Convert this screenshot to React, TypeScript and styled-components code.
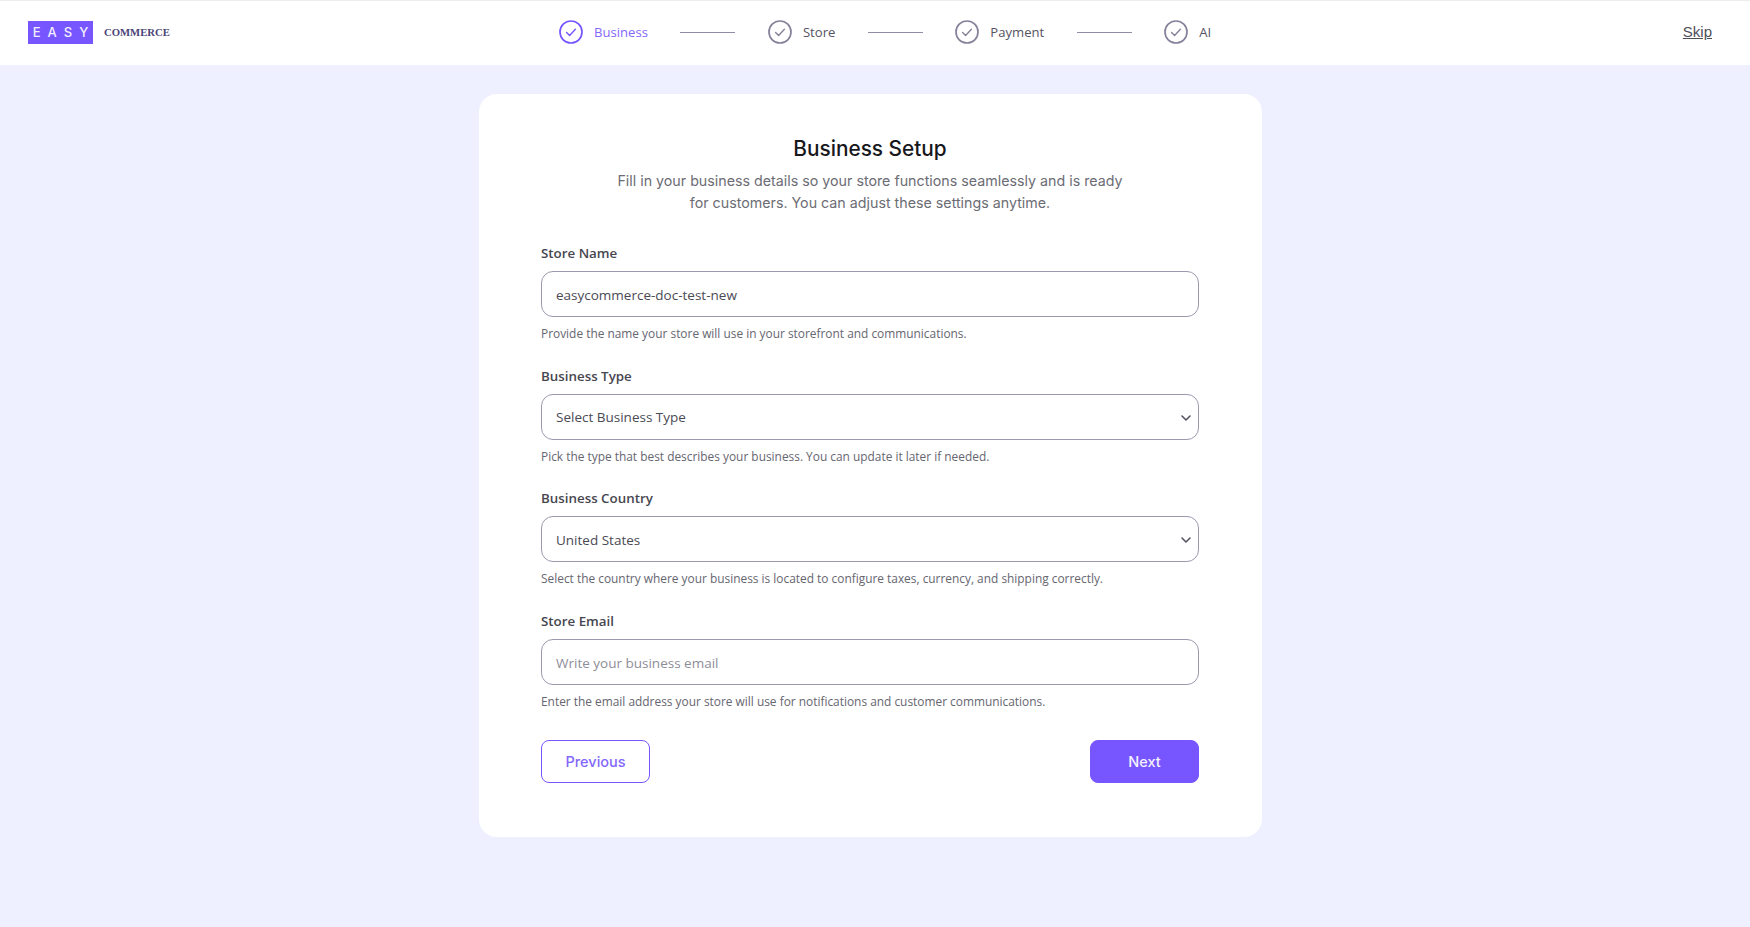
import { Fragment } from "react";
import { ChevronDown } from "lucide-react";
import styled, { createGlobalStyle } from "styled-components";

const GlobalStyle = createGlobalStyle`
  html, body {
    margin: 0;
    padding: 0;
    background: #eef0ff;
  }
  * {
    box-sizing: border-box;
  }
`;

const purple = "#7856ff";

const Page = styled.div`
  min-height: 927px;
  padding-bottom: 1px;
  background: #eef0ff;
  font-family: "Open Sans", "Noto Sans", sans-serif;
`;

const Header = styled.header`
  display: flex;
  align-items: center;
  height: 65px;
  padding: 0 38px 2px 28px;
  background: #fff;
  border-top: 1px solid #ededed;
`;

const Logo = styled.div`
  display: flex;
  flex: 0 0 531px;
  align-items: center;
  gap: 11px;
`;

const LogoMark = styled.span`
  display: flex;
  align-items: center;
  justify-content: center;
  width: 65px;
  height: 23px;
  background: ${purple};
  color: #f1eeff;
  font-family: "Inter", sans-serif;
  font-size: 13px;
  font-weight: 500;
  letter-spacing: 7px;
  text-indent: 7px;
`;

const LogoText = styled.span`
  color: #4b4478;
  font-family: "Liberation Serif", serif;
  font-size: 10.7px;
  font-weight: 700;
`;

const Stepper = styled.ol`
  display: flex;
  align-items: center;
  margin: 0;
  padding: 0;
  list-style: none;
`;

const Step = styled.li<{ $active?: boolean }>`
  display: flex;
  align-items: center;
  gap: 11px;
  color: ${(p) => (p.$active ? "#8467fb" : "#55535f")};
  font-size: 13.1px;

  svg {
    color: ${(p) => (p.$active ? purple : "#85839a")};
  }
`;

const StepLine = styled.span`
  width: 55px;
  height: 1px;
  margin: 0 32.5px 0 32.5px;
  background: #8f8da3;
`;

const Skip = styled.a`
  margin: 0 0 2px auto;
  color: #4d4d57;
  font-family: "Liberation Sans", sans-serif;
  font-size: 15px;
  text-decoration: underline;
`;

const Card = styled.main`
  width: 783px;
  height: 743px;
  margin: 29px 0 0 479px;
  padding: 41px 63px 0 62px;
  background: #fff;
  border-radius: 18px;
`;

const Title = styled.h1`
  margin: 0;
  color: #17171c;
  font-family: "Inter", sans-serif;
  font-size: 20.8px;
  font-weight: 500;
  line-height: 28px;
  text-align: center;
`;

const Intro = styled.p`
  margin: 7px 0 30px;
  color: #6c6c74;
  font-family: "Inter", sans-serif;
  font-size: 14.25px;
  line-height: 22px;
  text-align: center;
`;

const Field = styled.div`
  margin-bottom: 24.7px;
`;

const Label = styled.label`
  display: block;
  margin-bottom: 8px;
  color: #46464f;
  font-size: 13.35px;
  font-weight: 600;
  line-height: 19px;
`;

const controlStyles = `
  display: block;
  width: 100%;
  height: 46px;
  padding: 1px 14px 0;
  border: 1px solid #9b99ad;
  border-radius: 12px;
  background: #fff;
  color: #4a4a54;
  font-family: "Open Sans", "Noto Sans", sans-serif;
  font-size: 13.5px;
  outline: none;
`;

const TextInput = styled.input`
  ${controlStyles}

  &::placeholder {
    color: #8d8d99;
    opacity: 1;
  }
`;

const SelectWrap = styled.div`
  position: relative;

  svg {
    position: absolute;
    top: 16px;
    right: 5px;
    color: #55535f;
    pointer-events: none;
  }
`;

const Select = styled.select`
  ${controlStyles}
  appearance: none;
`;

const Hint = styled.p`
  margin: 8px 0 0;
  color: #666670;
  font-size: 11.9px;
  line-height: 17px;
`;

const Actions = styled.div`
  display: flex;
  justify-content: space-between;
  margin-top: 30px;
`;

const Button = styled.button<{ $primary?: boolean }>`
  width: 109px;
  height: 43px;
  border: 1px solid ${purple};
  border-radius: 8px;
  background: ${(p) => (p.$primary ? purple : "#fff")};
  color: ${(p) => (p.$primary ? "#f4f1ff" : "#8467fb")};
  font-family: "Inter", sans-serif;
  font-size: 14.5px;
  font-weight: 500;
`;

const steps = ["Business", "Store", "Payment", "AI"];

function StepIcon() {
  return (
    <svg width="24" height="24" viewBox="0 0 24 24" fill="none" stroke="currentColor" strokeLinecap="round" strokeLinejoin="round">
      <circle cx="12" cy="12" r="11" strokeWidth="1.7" />
      <path d="M7.6 12.4l3 3 5.8-6.2" strokeWidth="1.4" />
    </svg>
  );
}

function App() {
  return (
    <Page>
      <GlobalStyle />
      <Header>
        <Logo>
          <LogoMark>EASY</LogoMark>
          <LogoText>COMMERCE</LogoText>
        </Logo>
        <Stepper>
          {steps.map((step, i) => (
            <Fragment key={step}>
              <Step $active={i === 0}>
                <StepIcon />
                {step}
              </Step>
              {i < steps.length - 1 && <StepLine />}
            </Fragment>
          ))}
        </Stepper>
        <Skip href="#">Skip</Skip>
      </Header>

      <Card>
        <Title>Business Setup</Title>
        <Intro>
          Fill in your business details so your store functions seamlessly and is ready
          <br />
          for customers. You can adjust these settings anytime.
        </Intro>

        <Field>
          <Label>Store Name</Label>
          <TextInput defaultValue="easycommerce-doc-test-new" />
          <Hint>Provide the name your store will use in your storefront and communications.</Hint>
        </Field>

        <Field>
          <Label>Business Type</Label>
          <SelectWrap>
            <Select defaultValue="">
              <option value="">Select Business Type</option>
            </Select>
            <ChevronDown size={16} strokeWidth={2.4} />
          </SelectWrap>
          <Hint>Pick the type that best describes your business. You can update it later if needed.</Hint>
        </Field>

        <Field>
          <Label>Business Country</Label>
          <SelectWrap>
            <Select defaultValue="us">
              <option value="us">United States</option>
            </Select>
            <ChevronDown size={16} strokeWidth={2.4} />
          </SelectWrap>
          <Hint>Select the country where your business is located to configure taxes, currency, and shipping correctly.</Hint>
        </Field>

        <Field>
          <Label>Store Email</Label>
          <TextInput placeholder="Write your business email" />
          <Hint>Enter the email address your store will use for notifications and customer communications.</Hint>
        </Field>

        <Actions>
          <Button>Previous</Button>
          <Button $primary>Next</Button>
        </Actions>
      </Card>
    </Page>
  );
}

export default App;
